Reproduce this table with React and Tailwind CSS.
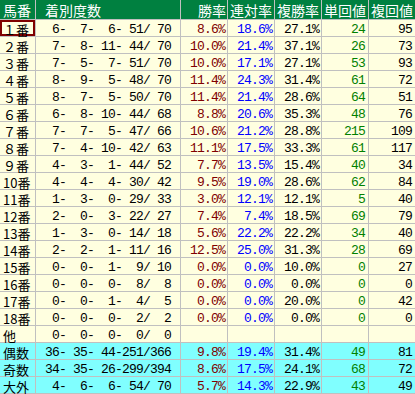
import React from 'react'

const pad = (n, w) => String(n).padStart(w, ' ')

const rows = [
  ['１番', [6, 7, 6, 51, 70], '8.6%', '18.6%', '27.1%', '24', '95'],
  ['２番', [7, 8, 11, 44, 70], '10.0%', '21.4%', '37.1%', '26', '73'],
  ['３番', [7, 5, 7, 51, 70], '10.0%', '17.1%', '27.1%', '53', '93'],
  ['４番', [8, 9, 5, 48, 70], '11.4%', '24.3%', '31.4%', '61', '72'],
  ['５番', [8, 7, 5, 50, 70], '11.4%', '21.4%', '28.6%', '64', '51'],
  ['６番', [6, 8, 10, 44, 68], '8.8%', '20.6%', '35.3%', '48', '76'],
  ['７番', [7, 7, 5, 47, 66], '10.6%', '21.2%', '28.8%', '215', '109'],
  ['８番', [7, 4, 10, 42, 63], '11.1%', '17.5%', '33.3%', '61', '117'],
  ['９番', [4, 3, 1, 44, 52], '7.7%', '13.5%', '15.4%', '40', '34'],
  ['10番', [4, 4, 4, 30, 42], '9.5%', '19.0%', '28.6%', '62', '84'],
  ['11番', [1, 3, 0, 29, 33], '3.0%', '12.1%', '12.1%', '5', '40'],
  ['12番', [2, 0, 3, 22, 27], '7.4%', '7.4%', '18.5%', '69', '79'],
  ['13番', [1, 3, 0, 14, 18], '5.6%', '22.2%', '22.2%', '34', '40'],
  ['14番', [2, 2, 1, 11, 16], '12.5%', '25.0%', '31.3%', '28', '69'],
  ['15番', [0, 0, 1, 9, 10], '0.0%', '0.0%', '10.0%', '0', '27'],
  ['16番', [0, 0, 0, 8, 8], '0.0%', '0.0%', '0.0%', '0', '0'],
  ['17番', [0, 0, 1, 4, 5], '0.0%', '0.0%', '20.0%', '0', '42'],
  ['18番', [0, 0, 0, 2, 2], '0.0%', '0.0%', '0.0%', '0', '0'],
  ['他', [0, 0, 0, 0, 0], '', '', '', '', ''],
  ['偶数', [36, 35, 44, 251, 366], '9.8%', '19.4%', '31.4%', '49', '81', true],
  ['奇数', [34, 35, 26, 299, 394], '8.6%', '17.5%', '24.1%', '68', '72', true],
  ['大外', [4, 6, 6, 54, 70], '5.7%', '14.3%', '22.9%', '43', '49', true],
]

const jp = "font-['Noto_Sans_CJK_JP',sans-serif]"
const num = "font-['Liberation_Mono',monospace] text-[13px] tracking-[-0.8px] leading-[12px] pt-[4px] whitespace-pre"

const headers = [
  { label: '馬番', cls: 'pl-[3px]' },
  { label: '着別度数', cls: 'pl-[9px]' },
  { label: '勝率', cls: 'justify-end pr-px' },
  { label: '連対率', cls: 'justify-center' },
  { label: '複勝率', cls: 'justify-center' },
  { label: '単回値', cls: 'justify-center' },
  { label: '複回値', cls: 'justify-center' },
]

function Row({ row, first }) {
  const [label, [a, b, c, d, e], win, place, show, tan, fuku, cyan] = row
  const bg = cyan ? 'bg-[#80ffff]' : 'bg-[#ffffe0]'
  const fmt = `${pad(a, 2)}- ${pad(b, 2)}- ${pad(c, 2)}-${pad(d, 3)}/${pad(e, 3)}`
  return (
    <>
      <div
        className={`${bg} ${jp} flex items-center text-[13px] leading-[13px] pl-[3px] pt-[2px] text-black whitespace-nowrap ${
          first ? 'shadow-[inset_0_0_0_2px_#800000]' : ''
        }`}
      >
        {label}
      </div>
      <div className={`${bg} ${num} pl-[9px] text-black`}>{fmt}</div>
      <div className={`${bg} ${num} text-right pr-[2px] text-[#800000]`}>{win}</div>
      <div className={`${bg} ${num} text-right pr-[2px] text-[#0000ff]`}>{place}</div>
      <div className={`${bg} ${num} text-right pr-[2px] text-black`}>{show}</div>
      <div className={`${bg} ${num} text-right pr-[3px] text-[#008000]`}>{tan}</div>
      <div className={`${bg} ${num} text-right pr-[3px] text-black`}>{fuku}</div>
    </>
  )
}

export default function App() {
  return (
    <div className="w-[415px] bg-white">
      <div className="grid grid-cols-[35px_144px_46px_46px_46px_46px_46px] grid-rows-[19px] auto-rows-[16px] gap-px bg-[#c0c0c0] pb-px">
        {headers.map((h) => (
          <div
            key={h.label}
            className={`flex items-end overflow-hidden bg-[#008040] text-white ${jp} text-[14px] leading-[15px] pb-px whitespace-nowrap ${h.cls}`}
          >
            {h.label}
          </div>
        ))}
        {rows.map((r, i) => (
          <Row key={r[0]} row={r} first={i === 0} />
        ))}
      </div>
    </div>
  )
}
